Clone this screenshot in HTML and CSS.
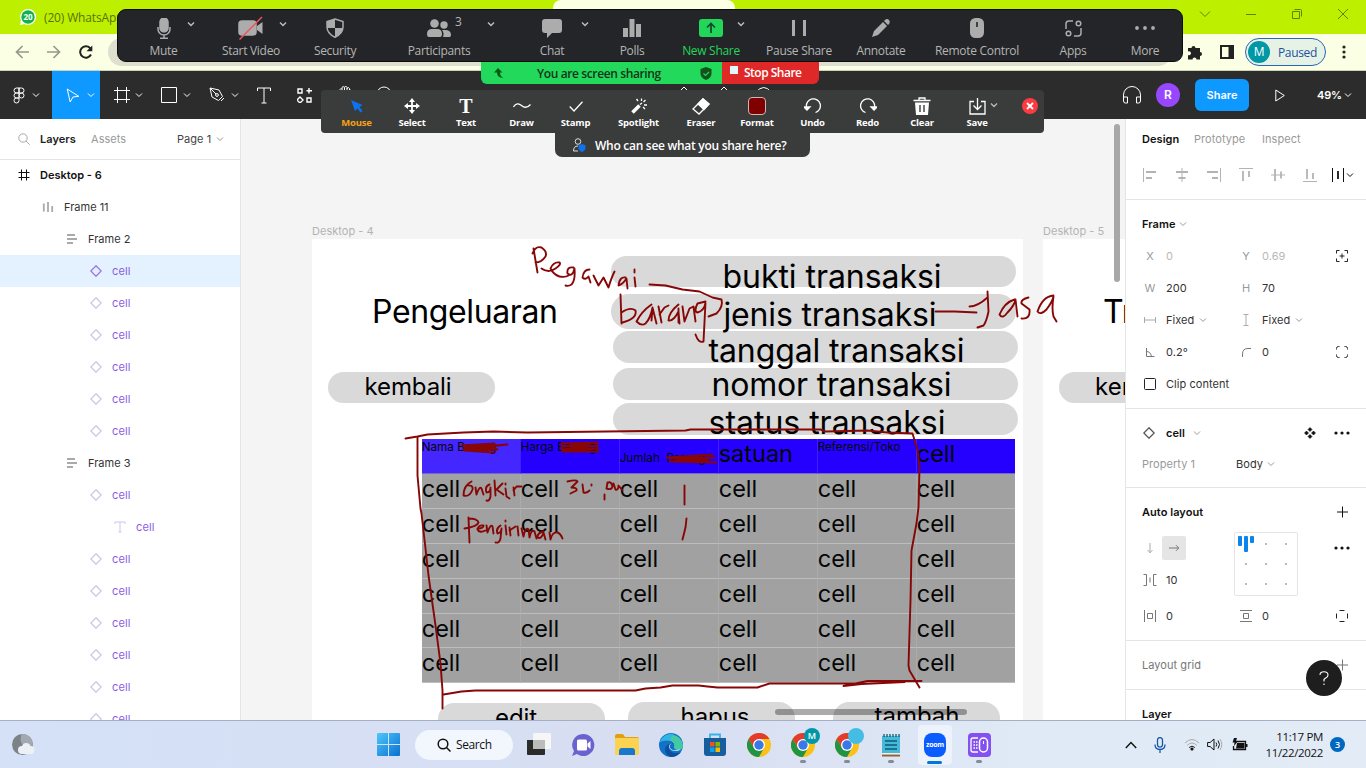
FILE: index.html
```html
<!DOCTYPE html>
<html lang="en">
<head>
<meta charset="utf-8">
<title>Desktop</title>
<link rel="stylesheet" href="styles.css">
</head>
<body>
<svg class="defs" aria-hidden="true">
  <symbol id="chev" viewBox="0 0 8 8"><path d="M1 2.5l3 3 3-3" fill="none" stroke="currentColor"/></symbol>
  <symbol id="diamond" viewBox="0 0 12 12"><path d="M6 .8L11.2 6 6 11.2.8 6z" fill="none" stroke="currentColor" stroke-width="1.3"/></symbol>
  <symbol id="plus" viewBox="0 0 12 12"><path d="M6.500 .5v11M1 6h11" stroke="currentColor"/></symbol>
  <symbol id="dots" viewBox="0 0 16 4"><g fill="currentColor"><circle cx="2" cy="2" r="1.6"/><circle cx="8" cy="2" r="1.6"/><circle cx="14" cy="2" r="1.6"/></g></symbol>
  <symbol id="hash" viewBox="0 0 12 12"><path d="M3.5.5v11M8.5.5v11M.5 3.5h11M.5 8.5h11" stroke="currentColor" fill="none"/></symbol>
  <symbol id="lines" viewBox="0 0 10 10"><path d="M0 1h8M0 5h10M0 9h6" stroke="currentColor" stroke-width="1.8"/></symbol>
  <symbol id="chrome" viewBox="0 0 24 24"><circle cx="12" cy="12" r="12" fill="#fbc116"/><path d="M1.6 6L7 15l5-3V6h10.4A12 12 0 0 0 1.6 6z" fill="#e33b2e"/><path d="M1.6 6A12 12 0 0 0 12 24l5-9-5 2-5-2z" fill="#229342"/><circle cx="12" cy="12" r="6" fill="#fff"/><circle cx="12" cy="12" r="4.7" fill="#3b78e7"/></symbol>
</svg>

<header class="tabs">
  <svg class="wa" width="16" height="16" viewBox="0 0 16 16"><path d="M0 16l1-4.500A8 8 0 1 1 4.500 15z" fill="#fff"/><circle cx="8" cy="8" r="6.700" fill="#12b24a"/></svg>
  <span class="wa-n">20</span>
  <span class="tab-title">(20) WhatsApp</span>
  <span class="tab-active"></span>
  <span class="win">
    <svg width="12" height="12" viewBox="0 0 12 12"><path d="M1 3.500l5 5 5-5"/></svg>
    <svg width="12" height="12" viewBox="0 0 12 12"><path d="M1 6.500h10"/></svg>
    <svg width="12" height="12" viewBox="0 0 12 12"><path d="M1.500 3.500h7v7h-7zM3.500 1.500h6q1 0 1 1v6"/></svg>
    <svg width="12" height="12" viewBox="0 0 12 12"><path d="M1 1l10 10M11 1L1 11"/></svg>
  </span>
</header>

<div class="nav">
  <svg width="14" height="14" viewBox="0 0 14 14" class="dim"><path d="M14 7H1.500M7.500 1l-6 6 6 6"/></svg>
  <svg width="14" height="14" viewBox="0 0 14 14" class="dim"><path d="M0 7h12.500M6.500 1l6 6-6 6"/></svg>
  <svg width="14" height="14" viewBox="0 0 14 14" class="dark"><path d="M12 9.500A5.700 5.700 0 1 1 11 3l1.500 1.500"/><path d="M13.300.5v5.800H7.500z" fill="#222" stroke="none"/></svg>
  <span class="url"></span>
  <svg width="16" height="16" viewBox="0 0 16 16"><path d="M1 4h3.500a2 2 0 1 1 4 0H13v4a2 2 0 1 1 0 4v3.500H9.500a2 2 0 1 0-4 0H1V11a2 2 0 1 0 0-3.500z" fill="#222"/></svg>
  <svg class="side" width="14" height="14" viewBox="0 0 14 14"><path d="M1 1h12v12H1z" fill="none" stroke="#222" stroke-width="2"/><path d="M8.500 1H13v12H8.500z" fill="#222"/></svg>
  <span class="profile"><b>M</b>Paused</span>
  <svg class="kebab" width="4" height="14" viewBox="0 0 4 14"><g fill="#222"><circle cx="2" cy="2" r="1.600"/><circle cx="2" cy="7" r="1.600"/><circle cx="2" cy="12" r="1.600"/></g></svg>
</div>

<div class="toolbar">
  <span class="tool t1"><svg width="12" height="17" viewBox="0 0 12 17"><path d="M6 1H3.500a2.500 2.500 0 0 0 0 5H6zM6 1h2.500a2.500 2.500 0 0 1 0 5H6zM6 6H3.500a2.500 2.500 0 0 0 0 5H6zM6 11H3.500A2.500 2.500 0 1 0 6 13.500z"/><circle cx="8.500" cy="8.500" r="2.500"/></svg><svg class="cv"><use href="#chev"/></svg></span>
  <span class="tool t2"><svg width="14" height="15" viewBox="0 0 14 15"><path d="M1.200 1l11.500 7.300-5.700.7-2.800 5z"/></svg><svg class="cv"><use href="#chev"/></svg></span>
  <span class="tool t3"><svg width="16" height="16" viewBox="0 0 16 16"><path d="M3.500 0v16M12.500 0v16M0 3.500h16M0 12.500h16"/></svg><svg class="cv"><use href="#chev"/></svg></span>
  <span class="tool t4"><svg width="16" height="16" viewBox="0 0 16 16"><path d="M.5.500h15v15H.500z"/></svg><svg class="cv"><use href="#chev"/></svg></span>
  <span class="tool t5"><svg width="16" height="16" viewBox="0 0 16 16"><path d="M1 1l9 2 3.500 6.500-4 4L3 10zM1 1l6 6M12 14l3-3"/><circle cx="8" cy="8" r="1.400"/></svg><svg class="cv"><use href="#chev"/></svg></span>
  <svg class="t6" width="14" height="17" viewBox="0 0 14 17"><path d="M.5 4V1h13v3M7 1v15M4.500 16h5"/></svg>
  <svg class="t7" width="15" height="15" viewBox="0 0 15 15"><path d="M1 1h4v4H1zM10 10h4v4h-4zM12 0v5.500M9.500 2.700H15M3 9l3 3-3 3-3-3z"/></svg>
  <svg class="t8" width="16" height="20" viewBox="0 0 16 20"><path d="M3 10V4.500q1-2 2 0V2.500q1-2 2.500 0 1-3 2.500 0v1q1.500-2 2.500 0v2q1.500-1 1.500 0v6q-2 6-6 6t-7-6M5 4.500V8M7.500 2.500V8M10 3v5M12.500 4.500V8"/></svg>
  <svg class="t9" width="16" height="18" viewBox="0 0 16 18"><circle cx="8" cy="8" r="7"/></svg>
  <svg class="t10" width="92" height="18" viewBox="0 0 92 18"><path d="M2 6l4-4 4 4M42 6l4-4 4 4M78 7q8-9 15 0"/></svg>
  <span class="grow"></span>
  <svg class="phones" width="20" height="19" viewBox="0 0 20 19"><path d="M1.500 13V9a8.500 8.500 0 0 1 17 0v4M1.500 11h4v6h-2q-2 0-2-2zM18.500 11h-4v6h2q2 0 2-2z"/></svg>
  <b class="avatar">R</b>
  <span class="share">Share</span>
  <svg class="play" width="10" height="13" viewBox="0 0 10 13"><path d="M.800 1l8.500 5.500L.800 12z"/></svg>
  <span class="pct">49%</span><svg class="cv"><use href="#chev"/></svg>
</div>

<main class="main">
  <aside class="layers">
    <div class="lhead"><svg width="12" height="12" viewBox="0 0 12 12"><circle cx="5" cy="5" r="4.200" fill="none" stroke="#aaa"/><path d="M8 8l3.700 3.700" stroke="#aaa"/></svg><b>Layers</b><span>Assets</span><em>Page 1</em><svg class="cv"><use href="#chev"/></svg></div>
    <div class="lrow d0"><svg><use href="#hash"/></svg>Desktop - 6</div>
    <div class="lrow d1"><svg viewBox="0 0 12 12"><path d="M1.800 2.500v8M6 1v10M10.200 5v6" stroke="#aaa" stroke-width="1.800"/></svg>Frame 11</div>
    <div class="lrow d2"><svg class="ln"><use href="#lines"/></svg>Frame 2</div>
    <div class="lrow d3 sel"><svg><use href="#diamond"/></svg>cell</div>
    <div class="lrow d3"><svg><use href="#diamond"/></svg>cell</div>
    <div class="lrow d3"><svg><use href="#diamond"/></svg>cell</div>
    <div class="lrow d3"><svg><use href="#diamond"/></svg>cell</div>
    <div class="lrow d3"><svg><use href="#diamond"/></svg>cell</div>
    <div class="lrow d3"><svg><use href="#diamond"/></svg>cell</div>
    <div class="lrow d2"><svg class="ln"><use href="#lines"/></svg>Frame 3</div>
    <div class="lrow d3"><svg><use href="#diamond"/></svg>cell</div>
    <div class="lrow d3 d4"><svg viewBox="0 0 12 12"><path d="M1 3V1h10v2M6 1v10M4.500 11h3" stroke="currentColor" fill="none"/></svg>cell</div>
    <div class="lrow d3"><svg><use href="#diamond"/></svg>cell</div>
    <div class="lrow d3"><svg><use href="#diamond"/></svg>cell</div>
    <div class="lrow d3"><svg><use href="#diamond"/></svg>cell</div>
    <div class="lrow d3"><svg><use href="#diamond"/></svg>cell</div>
    <div class="lrow d3"><svg><use href="#diamond"/></svg>cell</div>
    <div class="lrow d3"><svg><use href="#diamond"/></svg>cell</div>
  </aside>

  <section class="canvas">
    <span class="flabel f4">Desktop - 4</span>
    <span class="flabel f5">Desktop - 5</span>
    <div class="artboard a4"></div>
    <div class="artboard a5"></div>
    <div class="pill p1"></div><div class="pill p2"></div><div class="pill p3"></div><div class="pill p4"></div><div class="pill p5"></div>
    <div class="pill k1"></div><div class="pill k2"></div>
    <div class="pill e1"></div><div class="pill e2"></div><div class="pill e3"></div>
    <svg class="art" viewBox="241 119 884 601">
      <g class="big">
        <text x="372" y="323" textLength="186">Pengeluaran</text>
        <text x="1103" y="323">Tr</text>
        <text x="722.500" y="287.500" textLength="219">bukti transaksi</text>
        <text x="723.500" y="325.500" textLength="213">jenis transaksi</text>
        <text x="708.500" y="361.800" textLength="256">tanggal transaksi</text>
        <text x="711.500" y="395.500" textLength="240">nomor transaksi</text>
        <text x="708.500" y="434" textLength="237">status transaksi</text>
      </g>
      <g class="mid">
        <text x="364.500" y="394.500" textLength="87">kembali</text>
        <text x="1095" y="394.500">kem</text>
        <text x="495" y="725.500" textLength="42">edit</text>
        <text x="680.500" y="724.500" textLength="69">hapus</text>
        <text x="874.500" y="723.500" textLength="85">tambah</text>
      </g>
    </svg>
    <div class="table">
      <div class="th first sm">Nama Barang</div><div class="th sm">Harga Barang</div><div class="th sm low">Jumlah&nbsp; Barang</div><div class="th">satuan</div><div class="th sm ref">Referensi/Toko</div><div class="th">cell</div>
      <div>cell</div><div>cell</div><div>cell</div><div>cell</div><div>cell</div><div>cell</div>
      <div>cell</div><div>cell</div><div>cell</div><div>cell</div><div>cell</div><div>cell</div>
      <div>cell</div><div>cell</div><div>cell</div><div>cell</div><div>cell</div><div>cell</div>
      <div>cell</div><div>cell</div><div>cell</div><div>cell</div><div>cell</div><div>cell</div>
      <div>cell</div><div>cell</div><div>cell</div><div>cell</div><div>cell</div><div>cell</div>
      <div>cell</div><div>cell</div><div>cell</div><div>cell</div><div>cell</div><div>cell</div>
    </div>
    <svg class="ink" viewBox="240.500 118.500 884 601">
      <!-- frame round the table -->
      <path d="M405 438l12-2 10-2 36-2 30-1 34 1 158-2 5-1h130l5 2 42-1 20 2 25 1 5 16 2 18-1 40-2 16-5 27-1 50-2 65 1 5 10 17M921 680.500h-54l-24 5 18-2 43-2M862 683H777l-8 0-12 4H717l-10-1-9-1H672l-12 2-15 1-10 2H475l-14 1-18 3"/>
      <path d="M417 437v38l3 33 1 5 4 35 3 27 7 50 2 15 3 23 2 27v18"/>
      <!-- notes by the fields -->
      <path d="M533 248l2 12 2 12M532 253q3-8 9-6 6 4 4 9-4 6-10 6M541 268q7 5 14 0 6-4 4-6-6-1-9 6 3 6 9 8 6 1 9-1M573 267q-7-1-6 6 5 4 7-5 1 12-3 16-3 2-6 1M589 269q-6 0-7 8 3 3 6-1l2 6M593 275l5 10 5-8 5 10q3-10 6-16M625 277q-6-1-7 8 4-1 8-7l1 10M634 277l1 9M634 269v3"/>
      <path d="M649 284l16 1 17 4 17 2 13 6 9 2q2 7-5 14l-8 3M620 294l1 29M621 312q9-6 14-2 2 8-13 12M651 304q-10 7-15 17 5 5 9 2 5-5 7-16l4 16M652 308l-1 12M658 306l3 16M659 314l5-7 4-2M678 304q-10 8-10 16 5 1 10-9l1 12M678 308v14M682 306l2 15 5-13 4-2 2 15M705 301l-8 2q-4 8 0 9 7-2 8-10l-2 39q-5 2-8-7"/>
      <path d="M935 311l19 0 22 1M987 291l1 20q-2 10-5 14l-6 2M969 306q8 0 18-9M1014 299q-10 3-15 15 3 5 8-2 7-7 8-13l2 17M1028 297q-8 2-7 6l8 6q1 10-8 9M1053 295q-11 1-16 16 3 4 9-2 6-8 7-13-2 12 0 20l3 5"/>
      <!-- scribbled-out words -->
      <path d="M461 445l33-2-30 4 43-3-44 5 30-2 4 2-33 1 29 2M561 443l36-1-36 4 36-1-36 4 35-1-34 3h36M562 442v8M597 442v8M666 457l46-3-42 4 44-1-45 4 47 1-40-3 32 1"/>
      <!-- row notes -->
      <path d="M471 481q-8 4-8 14 6 2 9-6 1-5-6-4M475 487l1 7q3-9 5-6l2 6M489 484q-5 2-3 8 4 0 4-5v9q-1 5-4 4M494 480l1 15M502 483l-6 6 7 5M505 488l1 8 3 2M505 483v1M513 487l1 8M513 490l3-4h5M567 481q9-2 10 0l-6 6q6 0 5 3l-6 3M582 484l1 8q3 1 6-2M591 484v1M604 494v5M607 482l-1 6q5 2 6-2-1-5-4-4M613 483l2 6q3 1 3-4l4 5M684 485v19M686 518l-1 9-3 12"/>
      <path d="M468 517l1 25M464 528q13-2 14-6-1-4-10-4M477 528q6 0 6-3-5-1-6 4 2 4 8 1M486 525l1 7q3-9 5-6l1 7M500 525q-5 3-3 8 4-1 4-5l-1 10q-1 5-5 4M505 525l1 9M505 520v1M509 527l1 8M509 530l6-4M517 526l1 9M521 528l2 8q2-10 5-7l1 8q2-9 5-6l2 7M543 531q-6 1-6 6 4 2 6-5l2 7M549 532l1 7q2-8 7-7 3 1 5 6"/>
    </svg>
    <span class="vscroll"></span><span class="hscroll"></span>
  </section>

  <aside class="props">
    <div class="ptabs"><b>Design</b><span>Prototype</span><span>Inspect</span></div>
    <div class="align">
      <svg viewBox="0 0 14 14"><path d="M.5 0v14"/><path class="w" d="M3 4h10M3 10h6"/></svg>
      <svg viewBox="0 0 14 14"><path d="M7 0v14"/><path class="w" d="M1 4h12M3.500 10h7"/></svg>
      <svg viewBox="0 0 14 14"><path d="M13.500 0v14"/><path class="w" d="M0 4h11M5 10h6"/></svg>
      <svg viewBox="0 0 14 14"><path d="M0 .5h14"/><path class="w" d="M4 3v10M10 3v6"/></svg>
      <svg viewBox="0 0 14 14"><path d="M0 7h14"/><path class="w" d="M4 1v12M10 3.500v7"/></svg>
      <svg viewBox="0 0 14 14"><path d="M0 13.500h14"/><path class="w" d="M4 1v10M10 5v6"/></svg>
      <svg class="blk" viewBox="0 0 24 14"><path d="M1.500 0v14M12.500 0v14M16 5.500l3 3 3-3"/><path class="w" d="M7 3v8"/></svg>
    </div>
    <div class="sec frame">
      <div class="ptitle"><b>Frame</b><svg class="cv"><use href="#chev"/></svg></div>
      <div class="prow off"><i>X</i><span>0</span><i>Y</i><span>0.69</span><svg class="ic k" viewBox="0 0 12 12"><path d="M.5 3.500v-3h3M8.500.5h3v3M11.500 8.500v3h-3M3.500 11.500h-3v-3M6 3.500v5M3.500 6h5"/></svg></div>
      <div class="prow"><i>W</i><span>200</span><i>H</i><span>70</span></div>
      <div class="prow"><i><svg class="ic" viewBox="0 0 12 12"><path d="M.5 3v6M11.500 3v6M1 6h10"/></svg></i><span>Fixed<svg class="cv"><use href="#chev"/></svg></span><i><svg class="ic" viewBox="0 0 12 12"><path d="M3.500.5h5M3.500 11.500h5M6 1v10"/></svg></i><span>Fixed<svg class="cv"><use href="#chev"/></svg></span></div>
      <div class="prow"><i><svg class="ic g" viewBox="0 0 12 12"><path d="M2.500 2v8.500h8M2.500 5.500q4 0 5 5"/></svg></i><span>0.2°</span><i><svg class="ic g" viewBox="0 0 12 12"><path d="M2.500 11V8q0-5.500 5.500-5.500h3"/></svg></i><span>0</span><svg class="ic k" viewBox="0 0 12 12"><path d="M.5 3.500v-1q0-2 2-2h1M8.500.5h1q2 0 2 2v1M11.500 8.500v1q0 2-2 2h-1M3.500 11.500h-1q-2 0-2-2v-1"/></svg></div>
      <div class="prow clip"><i><svg class="ic k" viewBox="0 0 12 12"><rect x=".5" y=".5" width="11" height="11" rx="1"/></svg></i><span>Clip content</span></div>
    </div>
    <div class="sec comp">
      <div class="ctitle"><svg class="ic g"><use href="#diamond"/></svg><b>cell</b><svg class="cv"><use href="#chev"/></svg><svg class="four" viewBox="0 0 12 12"><path d="M6 .5l2 2-2 2-2-2zM6 7.500l2 2-2 2-2-2zM2.500 4l2 2-2 2-2-2zM9.500 4l2 2-2 2-2-2z" fill="#111" stroke="#111" stroke-width=".6"/></svg><svg class="dots"><use href="#dots"/></svg></div>
      <div class="cprop"><span>Property 1</span>Body<svg class="cv"><use href="#chev"/></svg></div>
    </div>
    <div class="sec auto">
      <div class="stitle"><b>Auto layout</b><svg class="pl"><use href="#plus"/></svg></div>
      <div class="abody">
        <div class="dir"><svg class="ic" viewBox="0 0 12 12"><path d="M6 1v10M3.500 8L6 10.700 8.500 8"/></svg><span><svg class="ic g" viewBox="0 0 12 12"><path d="M1 6h10M8 3.200L10.800 6 8 8.800"/></svg></span></div>
        <div class="gapv"><svg class="ic g" viewBox="0 0 14 12"><path d="M.5.500h3v11h-3M13.500.500h-3v11h3M7 3.500v5"/></svg>10</div>
        <div class="ngrid"><svg width="64" height="64" viewBox="0 0 64 64"><g fill="#bbb"><path d="M31 11h2v2h-2zM51 11h2v2h-2zM11 31h2v2h-2zM31 31h2v2h-2zM51 31h2v2h-2zM11 51h2v2h-2zM31 51h2v2h-2zM51 51h2v2h-2z"/></g><g fill="#0b84ee"><rect x="4" y="4" width="4" height="10" rx="1"/><rect x="10" y="4" width="4" height="16" rx="1"/><rect x="16" y="4" width="4" height="7" rx="1"/></g></svg></div>
        <svg class="dots"><use href="#dots"/></svg>
      </div>
      <div class="prow"><i><svg class="ic g" viewBox="0 0 12 12"><path d="M.500 0v12M11.500 0v12M3.500 3.500h5v5h-5z"/></svg></i><span>0</span><i><svg class="ic g" viewBox="0 0 12 12"><path d="M0 .500h12M0 11.500h12M3.500 3.500h5v5h-5z"/></svg></i><span>0</span><svg class="ic k" viewBox="0 0 12 12"><path d="M3.500.5h5M3.500 11.500h5M.5 3.500v5M11.500 3.500v5"/></svg></div>
    </div>
    <div class="sec lg"><div class="stitle"><span>Layout grid</span><svg class="pl"><use href="#plus"/></svg></div></div>
    <div class="sec last"><div class="stitle"><b>Layer</b></div></div>
    <span class="help"><svg width="10" height="15" viewBox="0 0 10 15"><path d="M1 4q0-3.300 4-3.300T9 4q0 2-2.300 3T5 9.800v.700M5 12.500v1.500" fill="none" stroke="#fff" stroke-width="1.100"/></svg></span>
  </aside>
</main>

<footer class="taskbar">
  <svg class="weather" width="24" height="24" viewBox="0 0 24 24"><circle cx="11.500" cy="11.500" r="10.500" fill="#7d8288"/><path d="M11 1a9 9 0 0 0 1 11 8 8 0 0 0 9.500 2A10.500 10.500 0 0 0 11 1z" fill="#a3a9b0"/><path d="M11 21a4 4 0 0 1 0-8 4.500 4.500 0 0 1 8.500 0 4 4 0 0 1 0 8z" fill="#edf1f6"/></svg>
  <svg class="win11" width="23" height="23" viewBox="0 0 23 23"><defs><linearGradient id="wg" x1="0" y1="0" x2="1" y2="1" gradientUnits="objectBoundingBox"><stop stop-color="#4cc8fb"/><stop offset="1" stop-color="#0a6fd0"/></linearGradient></defs><path d="M0 1q0-1 1-1h10v11H0zM12 0h10q1 0 1 1v10H12zM0 12h11v11H1q-1 0-1-1zM12 12h11v10q0 1-1 1H12z" fill="url(#wg)"/></svg>
  <span class="search"><svg width="14" height="14" viewBox="0 0 14 14"><circle cx="6" cy="6" r="4.800"/><path d="M9.500 9.500L13.500 13.500"/></svg>Search</span>
  <span class="app"><svg viewBox="0 0 24 24"><path d="M0 7h18v14q0 1-1 1H1q-1 0-1-1z" fill="#2b2b2b"/><path d="M7 0h16q1 0 1 1v15H6V1z" fill="#f6f6f6"/><path d="M6 7h12v9H6z" fill="#bcbcbc"/></svg></span>
  <span class="app"><svg viewBox="0 0 24 24"><path d="M12 1a11 11 0 1 1-6 20l-5 2 2-5A11 11 0 0 1 12 1z" fill="#6a63cf"/><path d="M6 8q0-1.500 1.500-1.500h7Q16 6.500 16 8v8q0 1.500-1.500 1.500h-7Q6 17.500 6 16zM16.500 10.500l3-2.500v8l-3-2.500z" fill="#fff"/></svg></span>
  <span class="app"><svg viewBox="0 0 24 24"><path d="M0 3q0-2 2-2h6l2 3h12q2 0 2 2v4H0z" fill="#e0a010"/><path d="M0 6q0-1 1-1h22q1 0 1 1v15q0 1-1 1H1q-1 0-1-1z" fill="#fcd253"/><path d="M4 22v-4q0-3 3-3h10q3 0 3 3v4z" fill="#1a78c8"/></svg></span>
  <span class="app"><svg viewBox="0 0 24 24"><circle cx="12" cy="12" r="12" fill="#1272c9"/><path d="M1 9a12 12 0 0 1 23 3q0 5-5 5-4 0-4-3 1-4-3-6-6-2-11 1z" fill="#43c9a4"/><path d="M1 9a12 12 0 0 1 14-8q-5 4-3 7-6-2-11 1z" fill="#2fb4e6"/><path d="M15 11q-5-1-5 4 1 5 7 5 3 0 5-1-4 5-10 5-6-2-6-8 1-6 9-5z" fill="#0d4f9f"/><path d="M13 10q-3 2-2 5 2 3 7 2l4-1q-2 2-5 2-6 0-7-4 0-3 3-4z" fill="#e1f0f8"/></svg></span>
  <span class="app"><svg viewBox="0 0 24 24"><path d="M7 5V1.500h10V5" fill="none" stroke="#35b4ea" stroke-width="1.800"/><path d="M1 5h22v15q0 3-3 3H4q-3 0-3-3z" fill="#185e9e"/><path fill="#f25022" d="M7 9h4.500v4.500H7z"/><path fill="#7fba00" d="M12.500 9H17v4.500h-4.500z"/><path fill="#00a4ef" d="M7 14.500h4.500V19H7z"/><path fill="#ffb900" d="M12.500 14.500H17V19h-4.500z"/></svg></span>
  <span class="app"><svg><use href="#chrome"/></svg></span>
  <span class="app run"><svg><use href="#chrome"/></svg><b class="mb">M</b></span>
  <span class="app run"><svg><use href="#chrome"/></svg><b class="mb sky"></b></span>
  <span class="app run"><svg viewBox="0 0 24 24"><path d="M3 3h18v19H3z" fill="#46b8d8"/><path d="M3 21.500h18v2H3z" fill="#a85820"/><path d="M3 20h18v1.500H3z" fill="#eee"/><path d="M5 1v3M8 1v3M11 1v3M14 1v3M17 1v3M20 1v3M6 8h12M6 12h12M6 16h12" stroke="#0d5a78" stroke-width="1.300"/></svg></span>
  <span class="app run act"><i class="zoomapp">zoom</i></span>
  <span class="app run"><svg viewBox="0 0 24 24"><rect x="1" y="0" width="23" height="24" rx="4" fill="#8450f2"/><path d="M11 5H6q-2 0-2 2v10q0 2 2 2h5" fill="none" stroke="#fff" stroke-width="1.300"/><rect x="12.500" y="5" width="8" height="14" rx="4" fill="none" stroke="#fff" stroke-width="1.500"/><path d="M6.500 9h4M6.500 12h4M6.500 15h4" stroke="#fff" stroke-width="1.500" stroke-dasharray="1.500 1"/><path d="M16.500 8v3" stroke="#fff"/></svg></span>
  <span class="grow"></span>
  <svg class="tcar" width="12" height="8" viewBox="0 0 12 8"><path d="M.800 7L6 1.500 11.200 7"/></svg>
  <svg class="tmic" width="12" height="16" viewBox="0 0 12 16"><rect x="3.500" y=".600" width="5" height="9.500" rx="2.500"/><path d="M1 7.500q0 5 5 5t5-5M6 12.500V16"/></svg>
  <svg class="twifi" width="16" height="13" viewBox="0 0 16 13"><path d="M1 5q7-7 14 0M3.200 7.300q4.800-4.600 9.600 0" stroke="#aaa"/><path d="M5.200 9.500q2.800-2.600 5.600 0"/><circle cx="8" cy="11" r="1.600" fill="#111" stroke="none"/></svg>
  <svg class="tspk" width="16" height="13" viewBox="0 0 16 13"><path d="M.600 4.500h2.500L7 1v11L3.100 8.500H.600zM9 4.500q1.500 2 0 4M11 2.500q3 4 0 8"/><path d="M13 1q3.500 5.500 0 11" stroke="#aaa"/></svg>
  <svg class="tbat" width="16" height="13" viewBox="0 0 16 13"><path d="M4 3.500h9.500v8h-12V8" stroke-width="1.300"/><path d="M5 5h7.500v5.500H4zM14 6h1.500v3H14zM2 0h3L4 3h2L2 8l.500-3.500H.500z" fill="#111" stroke="none"/></svg>
  <span class="clock">11:17 PM<br>11/22/2022</span>
  <b class="badge">3</b>
</footer>

<div class="zbar">
  <div><svg width="14" height="21" viewBox="0 0 14 21"><rect x="3" y="0" width="8" height="14" rx="4" fill="#acacac"/><path d="M1 9v2a6 6 0 0 0 12 0V9M7 17v3M3 20.200h8"/></svg><svg class="c" style="margin-left:23px"><use href="#chev"/></svg><span>Mute</span></div>
  <div><svg width="26" height="24" viewBox="0 0 26 24"><rect x="1" y="5" width="17" height="14" rx="3" fill="#acacac"/><path d="M19 10l5.500-4v12L19 14z" fill="#acacac" stroke="none"/><path d="M1.500 23.500L24 1" stroke="#f0525a"/></svg><svg class="c" style="margin-left:28px"><use href="#chev"/></svg><span>Start Video</span></div>
  <div><svg width="18" height="20" viewBox="0 0 18 20"><path d="M9 1l8 2.500V9q0 6.500-8 10.200Q1 15.500 1 9V3.500z" fill="#242528"/><path d="M9 1v9H1V3.500zM9 10h8q-.5 6-8 9.200z" fill="#acacac" stroke="none"/></svg><span>Security</span></div>
  <div><svg width="24" height="18" viewBox="0 0 24 18"><g fill="#acacac" stroke="none"><circle cx="7.500" cy="4.500" r="4.300"/><circle cx="17" cy="6" r="3.700"/><path d="M0 15q0-5 5-5h5q5 0 5 5 0 3-2 3H2q-2 0-2-3zM16 18q1.500-4-1-7h3q6 0 6 5 0 2-1.500 2z"/></g></svg><sup>3</sup><svg class="c" style="margin-left:48px"><use href="#chev"/></svg><span>Participants</span></div>
  <div><svg width="20" height="19" viewBox="0 0 20 19"><path d="M3 0h14q3 0 3 3v8q0 3-3 3h-7l-5 5v-5H3q-3 0-3-3V3q0-3 3-3z" fill="#acacac" stroke="none"/></svg><svg class="c" style="margin-left:29px"><use href="#chev"/></svg><span>Chat</span></div>
  <div><svg width="18" height="18" viewBox="0 0 18 18"><path d="M0 9h5v9H0zM6.500 0h5v18h-5zM13 5h5v13h-5z" fill="#acacac" stroke="none"/></svg><span>Polls</span></div>
  <div class="new"><svg width="24" height="18" viewBox="0 0 24 18"><rect width="24" height="18" rx="3" fill="#22d65a" stroke="none"/><path d="M12 14V5M8 8.500l4-4 4 4" stroke="#143" stroke-width="1.700"/></svg><svg class="c" style="margin-left:26px"><use href="#chev"/></svg><span>New Share</span></div>
  <div><svg width="14" height="16" viewBox="0 0 14 16"><path d="M1.500 0v16M12.500 0v16" stroke-width="3"/></svg><span>Pause Share</span></div>
  <div><svg width="18" height="18" viewBox="0 0 18 18"><path d="M0 18l2-6 9-9 4 4-9 9zM12 2l1-1q2-2 4 0 1.500 2 0 4l-1 1z" fill="#acacac" stroke="none"/></svg><span>Annotate</span></div>
  <div><svg width="14" height="20" viewBox="0 0 14 20"><rect width="14" height="20" rx="5.500" fill="#acacac" stroke="none"/><path d="M7 4v5" stroke="#242528" stroke-width="1.600"/></svg><span>Remote Control</span></div>
  <div><svg width="17" height="17" viewBox="0 0 17 17"><path d="M1 9V4q0-3 3-3h4M16 8v5q0 3-3 3H9"/><circle cx="13.500" cy="3.500" r="2.300"/><circle cx="3.500" cy="13.500" r="2.300"/></svg><span>Apps</span></div>
  <div><svg width="20" height="4" viewBox="0 0 20 4"><g fill="#acacac" stroke="none"><circle cx="2" cy="2" r="1.900"/><circle cx="10" cy="2" r="1.900"/><circle cx="18" cy="2" r="1.900"/></g></svg><span>More</span></div>
</div>

<div class="sharing">
  <div class="green"><svg width="12" height="12" viewBox="0 0 12 12"><path d="M5 1L1 5.500h3q0 5 6.500 5.500Q7 9 7 5.500h2.500z" fill="#075a10"/></svg><span>You are screen sharing</span><svg width="12" height="13" viewBox="0 0 12 13"><path d="M6 0l5.500 2v4.500q0 4-5.500 6.500Q.5 10.500.5 6.500V2z" fill="#14521c"/><path d="M3.500 6.500l2 2 3.500-3.500" fill="none" stroke="#22d65a" stroke-width="1.200"/></svg></div>
  <div class="red"><i></i>Stop Share</div>
</div>

<div class="abar">
  <div class="mouse"><svg width="12" height="14" viewBox="0 0 12 14"><path d="M0 1l11.500 5-3 2 3 4-2 1.500-3-4L4 12z" fill="#0e72ed" stroke="none"/></svg><span>Mouse</span></div>
  <div><svg width="16" height="16" viewBox="0 0 16 16"><path d="M8 2v12M2 8h12" stroke-width="1.800"/><path d="M8 0l3 4H5zM8 16l3-4H5zM0 8l4-3v6zM16 8l-4-3v6z" fill="#fff" stroke="none"/></svg><span>Select</span></div>
  <div><strong>T</strong><span>Text</span></div>
  <div><svg width="18" height="8" viewBox="0 0 18 8"><path d="M.5 5q3.500-5.500 8-1.500t9-1"/></svg><span>Draw</span></div>
  <div><svg width="14" height="11" viewBox="0 0 14 11"><path d="M.7 5.500l4.300 4.500L13.500.7"/></svg><span>Stamp</span></div>
  <div><svg width="16" height="16" viewBox="0 0 16 16"><path d="M1.500 14.500l7-7" stroke-width="3.600"/><path d="M9 6.500L11 5M7 3L5.500 1M10.500 3V.5M12.500 4l2-2M13 7h3M12 9l2 2"/></svg><span>Spotlight</span></div>
  <div><svg width="18" height="17" viewBox="0 0 18 17"><path d="M1 11L11 1l6 5L7 16z"/><path d="M6 6l5-5 6 5-5 5.500z" fill="#fff"/></svg><span>Eraser</span></div>
  <div><i class="swatch"></i><span>Format</span></div>
  <div><svg width="18" height="16" viewBox="0 0 18 16"><path d="M2.500 9a7 7 0 1 1 9 5.500"/><path d="M0 9h6l-3 3z" fill="#fff"/></svg><span>Undo</span></div>
  <div><svg width="18" height="16" viewBox="0 0 18 16"><path d="M15.500 9a7 7 0 1 0-9 5.500"/><path d="M18 9h-6l3 3z" fill="#fff"/></svg><span>Redo</span></div>
  <div><svg width="18" height="18" viewBox="0 0 18 18"><path d="M.500 3.500h17M6 3V1h6v2"/><path d="M2 5.500h14L15 18H3z" fill="#fff" stroke="none"/><path d="M7 8v7M11 8v7" stroke="#3a3b3b" stroke-width="1.400"/></svg><span>Clear</span></div>
  <div><svg width="17" height="17" viewBox="0 0 17 17"><path d="M5 3.500H1v12.500h15V3.500h-4M8.500 0v11M4.500 7.500l4 4 4-4"/></svg><svg class="c"><use href="#chev"/></svg><span>Save</span></div>
  <div class="close"><svg width="16" height="16" viewBox="0 0 16 16"><circle cx="8" cy="8" r="8" fill="#fb3b41" stroke="none"/><path d="M5 5l6 6M11 5l-6 6" stroke-width="1.800"/></svg></div>
</div>
<div class="who"><svg width="14" height="14" viewBox="0 0 14 14"><circle cx="6" cy="3.500" r="2.800" fill="none" stroke="#ddd"/><path d="M6 13H1.500q0-5 4.500-5" fill="none" stroke="#ddd"/><path d="M10 6l3.500 1.300v2.500q0 3-3.500 4.200-3.500-1.200-3.500-4.200V7.300z" fill="#0e72ed"/></svg>Who can see what you share here?</div>
</body>
</html>
```
FILE: styles.css
```css
*{box-sizing:border-box}
body{margin:0;width:1366px;height:768px;overflow:hidden;display:grid;grid-template-rows:34px 37px 48px 601px 48px;font:11px Inter,sans-serif;color:#333;position:relative}
.defs{position:absolute;width:0;height:0}
.grow{flex:1}
.cv{width:8px;height:8px;flex:none}
b{font-weight:600}
i,em{font-style:normal}

.tabs{background:#bdf000;display:flex;align-items:center;padding-left:20px;position:relative;font:12px "Open Sans",sans-serif;color:#5a7108}
.wa-n{position:absolute;left:20px;top:10px;width:16px;text-align:center;font:bold 8px/14px "Open Sans",sans-serif;color:#fff}
.tab-title{margin-left:8px;letter-spacing:-.15px}
.tab-active{position:absolute;left:553px;top:0;width:182px;height:34px;background:#fbffe3;border-radius:8px 8px 0 0}
.win{margin-left:auto;display:flex;gap:34px;padding-right:17px;margin-top:-6px}
.win svg{fill:none;stroke:#648000}

.nav{background:#fbffe3;display:flex;align-items:center;padding:0 19px 0 15px;border-bottom:1px solid #cdd3b8}
.nav .dim,.nav .dark{fill:none;stroke:#98998b;stroke-width:1.7;margin-right:18px}
.nav .dark{stroke:#222;stroke-width:2;margin-right:15px}
.url{width:1064px;height:28px;border-radius:14px;background:#dedfcf;margin-right:15px}
.nav .side{margin-left:17px}
.profile{width:81px;height:28px;border:1px solid #2c62c0;border-radius:14px;background:#e6f2e3;margin-left:11px;display:flex;align-items:center;gap:8px;padding-left:2px;color:#2050a8;font:12px "Open Sans",sans-serif;letter-spacing:-.35px}
.profile b{width:22px;height:22px;border-radius:50%;background:#0097a7;color:#fff;text-align:center;line-height:22px;font-weight:400}
.kebab{margin-left:16px}

.toolbar{background:#2c2c2c;display:flex;align-items:center;color:#fff}
.toolbar svg{fill:none;stroke:#fff;flex:none}
.toolbar svg.cv{stroke:none}
.tool{display:flex;align-items:center;height:48px}
.t1{width:52px;padding-left:13px}.t1 .cv{margin-left:7px}
.t2{width:48px;background:#0d99ff;padding-left:14px}.t2 .cv{margin-left:7px}
.t3{width:46px;padding-left:14px}.t3 .cv{margin-left:5px}
.t4{width:48px;padding-left:15px}.t4 .cv{margin-left:6px}
.t5{width:62px;padding-left:15px}.t5 .cv{margin-left:6px}
.t6{margin-right:26px;margin-left:1px}
.toolbar .t7{stroke-width:1.4}
.t8{margin-left:25px}
.t9{margin-left:23px}
.t10{margin-left:286px;margin-bottom:2px}
.avatar{width:24px;height:24px;border-radius:50%;background:#9747ff;text-align:center;font-size:12px;line-height:24px;margin-left:14px}
.share{width:54px;height:32px;background:#0d99ff;border-radius:6px;margin-left:15px;font-weight:600;line-height:32px;text-align:center}
.play{margin-left:26px}
.pct{margin-left:32px;font-weight:600;width:27px;letter-spacing:-.2px}
.toolbar>.cv{margin-right:14px}

.main{display:grid;grid-template-columns:241px 884px 241px;min-height:0;overflow:hidden}
.layers{background:#fff;overflow:hidden;border-right:1px solid #e5e5e5}
.lhead{height:40px;display:flex;align-items:center;padding-left:18px;box-shadow:0 1px #e5e5e5;letter-spacing:.05px}
.lhead b{margin-left:10px;width:51px;color:#222}
.lhead span{color:#999;width:86px}
.lhead em{width:36px;color:#444}
.lhead .cv{color:#999;margin-left:3px}
.lrow{height:32px;display:flex;align-items:center}
.lrow svg{width:12px;height:12px;margin-right:10px;flex:none}
.lrow .ln{width:10px;height:10px;color:#aaa;margin:0 11px 0 1px}
.d0{padding-left:18px;font-weight:600;color:#111}
.d1{padding-left:42px}.d2{padding-left:66px}
.d3{padding-left:90px;color:#8a5ce6;letter-spacing:.15px}
.d3 svg{color:#d0c3e6}
.d4{padding-left:114px}
.sel{background:#e3f2fe}
.sel svg{color:#9e70ee}

.canvas{background:#f4f4f4;position:relative;overflow:hidden}
.flabel{position:absolute;top:105px;color:#b3b3b3;letter-spacing:.02px}
.f4{left:71px}.f5{left:802px}
.artboard{position:absolute;top:120px;bottom:0;background:#fff}
.a4{left:71px;width:711px}.a5{left:802px;width:82px}
.pill{position:absolute;background:#d9d9d9;border-radius:16px;height:31.500px;width:405px}
.p1{left:369.500px;top:136.500px}.p2{left:369.500px;top:175px;height:34.500px;border-radius:17.500px}
.p3{left:372px;top:212px}.p4{left:372px;top:249px}.p5{left:372px;top:284px}
.pill.k1,.pill.k2,.pill.e1,.pill.e2,.pill.e3{width:167px}
.k1{left:87px;top:252.500px}.k2{left:818px;top:252.500px}
.e1{left:196.500px;top:584px}.e2{left:387px;top:583px}.e3{left:592px;top:583px}
.art,.ink{position:absolute;left:0;top:0;width:884px;height:601px}
.art text{font-family:Inter,sans-serif}
.big{font-size:32px}.mid{font-size:24px}
.ink{fill:none;stroke:#870707;stroke-width:1.9;stroke-linejoin:round;stroke-linecap:round}
.table{position:absolute;left:181px;top:320px;width:593px;display:grid;grid-template-columns:repeat(6,99px);grid-template-rows:35px repeat(6,34.900px);background:#a1a1a1;overflow:hidden;font-size:23.500px;line-height:30px;color:#050505}
.table div{border-right:1px solid #ababab;border-bottom:1px solid #bdbdbd;white-space:nowrap;text-indent:-.300px}
.table .th{background:#2600ff;border-right-color:#3e1fff;border-bottom-color:#7368ce}
.table .first{background:#4426ff}
.table .sm{font-size:11.700px;line-height:16px}
.table .low{padding-top:11px}
.vscroll{position:absolute;left:873px;top:5px;width:6px;height:158px;border-radius:3px;background:#a8a8a8}
.hscroll{position:absolute;left:534px;top:590px;width:192px;height:6px;border-radius:3px;background:rgba(0,0,0,.33)}

.props{background:#fff;border-left:1px solid #e5e5e5;position:relative;overflow:hidden;letter-spacing:.05px}
.ptabs{height:40px;display:flex;align-items:center;padding-left:16px;color:#999}
.ptabs b{width:52px;color:#111}.ptabs span{width:68px}
.align{height:41px;display:flex;align-items:center;padding:0 0 8px 17px;gap:18px;border-bottom:1px solid #e5e5e5}
.align svg{width:14px;height:14px;fill:none;stroke:#b3b3b3;flex:none}
.align .w{stroke-width:1.800}
.align svg.blk{width:24px;stroke:#111;margin-left:-4px}
.sec{border-bottom:1px solid #e5e5e5}
.sec b{color:#111}
.frame{height:209px;padding-top:8px}
.ptitle{height:32px;display:flex;align-items:center;padding-left:16px;gap:4px}
.prow{height:32px;display:grid;grid-template-columns:28px 68px 28px 68px 24px;padding-left:12px;align-items:center}
.prow i{width:24px;text-align:center;color:#999;display:flex;justify-content:center}
.prow span{display:flex;align-items:center;gap:5px;white-space:nowrap}
.prow>svg{justify-self:center}
.off span{color:#b8b8b8}
.cv{color:#999}.toolbar .cv{color:#fff}
.ic{width:12px;height:12px;fill:none;stroke:#aaa;flex:none}
.g{stroke:#777;color:#555}.k{stroke:#222}
.comp{height:79px;padding-top:8px}
.ctitle{height:32px;display:flex;align-items:center;padding:0 16px 0 17px}
.ctitle b{margin:0 8px 0 11px;width:19px}
.four{width:12px;height:12px;margin-left:auto;margin-right:18px}
.dots{width:16px;height:4px;color:#111}
.cprop{height:30px;display:flex;align-items:center;padding-left:16px}
.cprop span{width:94px;color:#999}.cprop .cv{margin-left:4px}
.auto{height:153px;padding-top:8px}
.stitle{height:32px;display:flex;align-items:center;justify-content:space-between;padding:0 18px 0 16px}
.pl{width:12px;height:12px;color:#111}
.abody{display:grid;grid-template-columns:96px 64px 1fr;grid-template-rows:32px 36px;padding:4px 16px 0 12px}
.dir{display:flex;align-items:center;padding-left:6px;gap:6px}
.dir span{width:24px;height:24px;border-radius:2px;background:#e5e5e5;display:grid;place-items:center}
.gapv{grid-row:2;display:flex;align-items:center;gap:9px;padding-left:5px;height:32px}
.gapv svg{width:14px}
.ngrid{grid-row:1/3;grid-column:2;width:64px;height:64px;box-shadow:inset 0 0 0 1px #e5e5e5;border-radius:2px}
.abody .dots{grid-column:3;grid-row:1;justify-self:end;align-self:center}
.lg{height:49px;padding-top:8px;color:#777}.lg .pl{color:#777}
.last{padding-top:8px}
.help{position:absolute;left:180px;top:541px;width:36px;height:36px;border-radius:50%;background:#1e1e1e;display:grid;place-items:center}

.taskbar{background:linear-gradient(90deg,#d4e1f7,#d8def2 50%,#dfeaf6 75%,#e2ebf6);border-top:1px solid #a6b0c4;display:flex;align-items:center;font-family:"Open Sans",sans-serif;color:#111}
.weather{margin-left:11px}
.win11{margin-left:342px}
.search{width:98px;height:30px;border-radius:15px;background:#f2f6fd;margin:0 4px 0 15px;display:flex;align-items:center;gap:5px;padding-left:22px;font-size:12px;letter-spacing:-.4px}
.search svg{fill:none;stroke:#111;stroke-width:1.500}
.app{width:44px;height:40px;display:grid;place-items:center;position:relative}
.app>svg{width:24px;height:24px}
.run:after{content:"";position:absolute;left:19px;bottom:2px;width:6px;height:3px;border-radius:2px;background:#858b96}
.act{background:#edf2fb;border-radius:4px;width:34px;margin:0 5px}
.act:after{left:9px;bottom:1px;width:15px;background:#0078d4}
.zoomapp{width:22px;height:24px;border-radius:8px;background:#0b5cff;color:#fff;font:bold 7px/23px "Open Sans",sans-serif;text-align:center;letter-spacing:-.3px}
.mb{position:absolute;left:23px;top:3px;width:16px;height:16px;border-radius:50%;background:#0097a7;color:#fff;font-size:9px;line-height:16px;text-align:center}
.sky{background:#45bce4}
.taskbar>svg{flex:none}
.tcar,.tmic,.twifi,.tspk,.tbat{fill:none;stroke:#111}
.tcar{stroke-width:1.400;margin-right:17px}
.tmic{stroke:#1a56a8;stroke-width:1.300;margin-right:18px}
.twifi{margin-right:7px}.tspk{margin-right:9px}
.clock{width:75px;text-align:right;font-size:11.500px;line-height:16px;letter-spacing:-.35px;white-space:nowrap}
.badge{width:15px;height:15px;border-radius:50%;background:#0067c0;color:#fff;font-size:9px;line-height:15px;text-align:center;margin:0 21px 0 7px}

.zbar{position:absolute;left:117px;top:9px;width:1066px;height:53px;border-radius:9px;background:#242528;border:1px solid #0c0c0d;display:grid;grid-template-columns:91px 84px 84px 124px 102px 58px 100px 76px 88px 104px 88px 56px;font:12px "Open Sans",sans-serif;color:#b5b5b5}
.zbar>div{position:relative;display:grid;grid-template-rows:36px 14px;justify-items:center;align-items:center}
.zbar svg{fill:none;stroke:#acacac;stroke-width:1.500}
.zbar span{line-height:14px;margin-top:-5px;white-space:nowrap;letter-spacing:-.3px}
.zbar .new{color:#22d65a}
svg.c{position:absolute;left:50%;top:10px;width:8px;height:8px;color:#bbb;stroke:none}
sup{position:absolute;left:78px;top:4px;font-size:12px;line-height:16px}

.sharing{position:absolute;left:481px;top:62px;display:flex;height:22px;font:600 12px/21px "Open Sans",sans-serif}
.green{width:241px;background:#22d95b;border-radius:0 0 0 6px;display:flex;align-items:center;color:#14331c;padding:0 10px 0 12px;letter-spacing:-.38px}
.green span{margin-left:32px;width:125px;white-space:nowrap}
.green svg:last-child{margin-left:auto}
.red{width:97px;background:#e02828;border-radius:0 0 6px 0;color:#fff;letter-spacing:-.5px;white-space:nowrap;display:flex;gap:6px;padding-left:8px}
.red i{width:8px;height:8px;background:#dff6fb;margin-top:4px}

.abar{position:absolute;left:321px;top:90px;width:723px;height:43px;background:#3a3b3b;border-radius:4px;display:grid;grid-template-columns:55px 56px 52px 59px 49px 77px 48px 64px 47px 63px 46px 64px 35px;padding-left:8px;color:#fff;font:700 9.500px "Open Sans",sans-serif}
.abar>div{position:relative;display:grid;grid-template-rows:32px 11px;justify-items:center;align-items:center}
.abar svg{fill:none;stroke:#fff;stroke-width:1.300}
.abar span{line-height:11px;margin-top:-11px;letter-spacing:-.2px}
.abar .mouse{color:#f5a118}
.abar strong{font:bold 20px/22px "Liberation Serif",serif}
.abar svg.c{margin-left:13px;top:11px;stroke:none}
.swatch{width:18px;height:18px;border-radius:4px;background:#800000;border:1px solid #c9b9b9}
.close{padding-left:7px}
.who{position:absolute;left:555px;top:133px;width:255px;height:24px;background:#3a3b3b;border-radius:0 0 7px 7px;color:#fff;font:600 12px "Open Sans",sans-serif;display:flex;align-items:center;gap:9px;padding-left:17px;letter-spacing:-.28px;white-space:nowrap}
```
